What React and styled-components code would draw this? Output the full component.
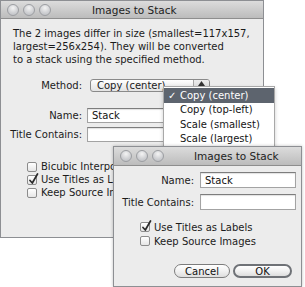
import React from "react";
import styled, { createGlobalStyle } from "styled-components";

const Global = createGlobalStyle`
  html, body { margin: 0; padding: 0; background: #ffffff; }
  body { font-family: "DejaVu Sans", "Liberation Sans", sans-serif; font-size: 10px; color: #1b1b1b; }
`;

const Desktop = styled.div`
  position: relative;
  width: 305px;
  height: 287px;
  overflow: hidden;
  background: #ffffff;
`;

const Window = styled.div`
  position: absolute;
  left: ${(p) => p.$left}px;
  top: ${(p) => p.$top}px;
  width: ${(p) => p.$width}px;
  height: ${(p) => p.$height}px;
  box-sizing: border-box;
  background: #ececec;
  border: 1px solid #8d8f93;
  display: flex;
  flex-direction: column;
  box-shadow: ${(p) => (p.$front ? "0 0 3px rgba(0,0,0,0.25)" : "none")};
`;

const TitleBar = styled.div`
  height: ${(p) => p.$h}px;
  flex: none;
  box-sizing: border-box;
  border-bottom: 1px solid #8e8e8e;
  background: linear-gradient(#dcdcdc, #bcbcbc);
  display: flex;
  align-items: center;
  padding-left: 6px;
  overflow: hidden;
`;

const Lights = styled.div`
  display: flex;
  gap: 4px;
  flex: none;
`;

const Light = styled.span`
  width: 12px;
  height: 12px;
  border-radius: 50%;
  box-sizing: border-box;
  border: 1px solid #9c9ea2;
  background: radial-gradient(circle at 50% 30%, #f4f4f4 0%, #d0d1d4 55%, #b9bbbf 100%);
`;

const Title = styled.div`
  flex: none;
  white-space: nowrap;
  font-size: 10.5px;
  color: #222;
  margin-left: ${(p) => p.$ml}px;
`;

const Paragraph = styled.p`
  margin: 8px 0 0 12px;
  line-height: 13px;
`;

const FormRow = styled.div`
  display: grid;
  grid-template-columns: ${(p) => p.$label}px ${(p) => p.$field}px;
  column-gap: ${(p) => p.$gap}px;
  align-items: center;
  margin-top: ${(p) => p.$mt}px;
`;

const Label = styled.span`
  text-align: right;
  white-space: nowrap;
`;

const TextField = styled.div`
  height: ${(p) => p.$h}px;
  box-sizing: border-box;
  background: #ffffff;
  border: 1px solid #a3a3a3;
  border-top-color: #7d7d7d;
  box-shadow: inset 0 1px 1px rgba(0, 0, 0, 0.12);
  padding-left: 4px;
  display: flex;
  align-items: center;
  color: #111;
`;

const Popup = styled.div`
  height: 13px;
  box-sizing: border-box;
  border: 1px solid #8a8a8a;
  border-radius: 3px;
  background: linear-gradient(#ffffff, #f0f0f0 50%, #e4e4e4);
  display: flex;
  align-items: center;
  overflow: hidden;
`;

const PopupText = styled.span`
  flex: 1;
  padding-left: 6px;
  white-space: nowrap;
`;

const PopupArrow = styled.span`
  width: 16px;
  height: 100%;
  border-left: 1px solid #a6a6a6;
  background: linear-gradient(#ececec, #d4d4d4);
  display: flex;
  justify-content: center;
  padding-top: 1px;
  box-sizing: border-box;
`;

const Checks = styled.div`
  display: flex;
  flex-direction: column;
  margin-top: ${(p) => p.$mt}px;
  padding-left: ${(p) => p.$pl}px;
`;

const CheckRow = styled.div`
  height: ${(p) => p.$h}px;
  display: flex;
  align-items: center;
  gap: 4px;
  white-space: nowrap;
`;

const Box = styled.span`
  position: relative;
  width: 10px;
  height: 10px;
  flex: none;
  box-sizing: border-box;
  border: 1px solid #8c8c8c;
  border-radius: 2px;
  background: linear-gradient(#ffffff, #e6e6e6);
`;

const Tick = styled.svg`
  position: absolute;
  left: 0px;
  top: -3px;
`;

const Buttons = styled.div`
  display: flex;
  justify-content: flex-end;
  gap: 3px;
  margin-top: ${(p) => p.$mt}px;
  padding-right: 9px;
`;

const Button = styled.div`
  width: ${(p) => p.$w}px;
  height: 14px;
  box-sizing: border-box;
  border-radius: 7px;
  border: ${(p) => (p.$default ? "2px solid #6f7277" : "1px solid #7c7c7c")};
  background: linear-gradient(#ffffff, #f1f1f1 50%, #dedede);
  display: flex;
  align-items: center;
  justify-content: center;
  color: #111;
`;

const Menu = styled.div`
  position: absolute;
  left: 163px;
  top: 86px;
  width: 112px;
  box-sizing: border-box;
  background: #ffffff;
  border: 1px solid #a8a8a8;
  padding-top: 1px;
  box-shadow: 0 2px 4px rgba(0, 0, 0, 0.2);
`;

const MenuItem = styled.div`
  height: 14.5px;
  display: flex;
  align-items: center;
  padding-left: 16px;
  position: relative;
  white-space: nowrap;
  background: ${(p) => (p.$selected ? "#5d646e" : "transparent")};
  color: ${(p) => (p.$selected ? "#ffffff" : "#151515")};
`;

const MenuCheck = styled.span`
  position: absolute;
  left: 4px;
`;

function Checkbox({ label, checked, h }) {
  return (
    <CheckRow $h={h}>
      <Box>
        {checked && (
          <Tick width="11" height="12" viewBox="0 0 11 12">
            <path d="M2 7.5 L4.3 10 L9.5 1" fill="none" stroke="#2a2a2a" strokeWidth="1.7" strokeLinecap="round" strokeLinejoin="round" />
          </Tick>
        )}
      </Box>
      <span>{label}</span>
    </CheckRow>
  );
}

function TitleBarBlock({ h, ml }) {
  return (
    <TitleBar $h={h}>
      <Lights>
        <Light />
        <Light />
        <Light />
      </Lights>
      <Title $ml={ml}>Images to Stack</Title>
    </TitleBar>
  );
}

export default function App() {
  return (
    <>
      <Global />
      <Desktop>
        <Window $left={0} $top={0} $width={264} $height={238}>
          <TitleBarBlock h={18} ml={41} />
          <Paragraph>
            The 2 images differ in size (smallest=117x157,
            <br />
            largest=256x254). They will be converted
            <br />
            to a stack using the specified method.
          </Paragraph>
          <FormRow $label={81} $field={120} $gap={8} $mt={13}>
            <Label>Method:</Label>
            <Popup>
              <PopupText>Copy (center)</PopupText>
              <PopupArrow>
                <svg width="7" height="5" viewBox="0 0 7 5">
                  <path d="M3.5 0 L7 5 L0 5 Z" fill="#333" />
                </svg>
              </PopupArrow>
            </Popup>
          </FormRow>
          <FormRow $label={81} $field={165} $gap={5} $mt={16}>
            <Label>Name:</Label>
            <TextField $h={15}>Stack</TextField>
          </FormRow>
          <FormRow $label={81} $field={165} $gap={5} $mt={4}>
            <Label>Title Contains:</Label>
            <TextField $h={15} />
          </FormRow>
          <Checks $mt={18} $pl={26}>
            <Checkbox h={13} label="Bicubic Interpolation" />
            <Checkbox h={13} label="Use Titles as Labels" checked />
            <Checkbox h={13} label="Keep Source Images" />
          </Checks>
        </Window>

        <Menu>
          <MenuItem $selected>
            <MenuCheck>✓</MenuCheck>Copy (center)
          </MenuItem>
          <MenuItem>Copy (top-left)</MenuItem>
          <MenuItem>Scale (smallest)</MenuItem>
          <MenuItem>Scale (largest)</MenuItem>
          <MenuItem>&nbsp;</MenuItem>
        </Menu>

        <Window $front $left={113} $top={146} $width={189} $height={141}>
          <TitleBarBlock h={19} ml={30} />
          <FormRow $label={80} $field={96} $gap={6} $mt={6}>
            <Label>Name:</Label>
            <TextField $h={16}>Stack</TextField>
          </FormRow>
          <FormRow $label={80} $field={96} $gap={6} $mt={6}>
            <Label>Title Contains:</Label>
            <TextField $h={16} />
          </FormRow>
          <Checks $mt={10} $pl={26}>
            <Checkbox h={14} label="Use Titles as Labels" checked />
            <Checkbox h={14} label="Keep Source Images" />
          </Checks>
          <Buttons $mt={16}>
            <Button $w={56}>Cancel</Button>
            <Button $w={59} $default>
              OK
            </Button>
          </Buttons>
        </Window>
      </Desktop>
    </>
  );
}
